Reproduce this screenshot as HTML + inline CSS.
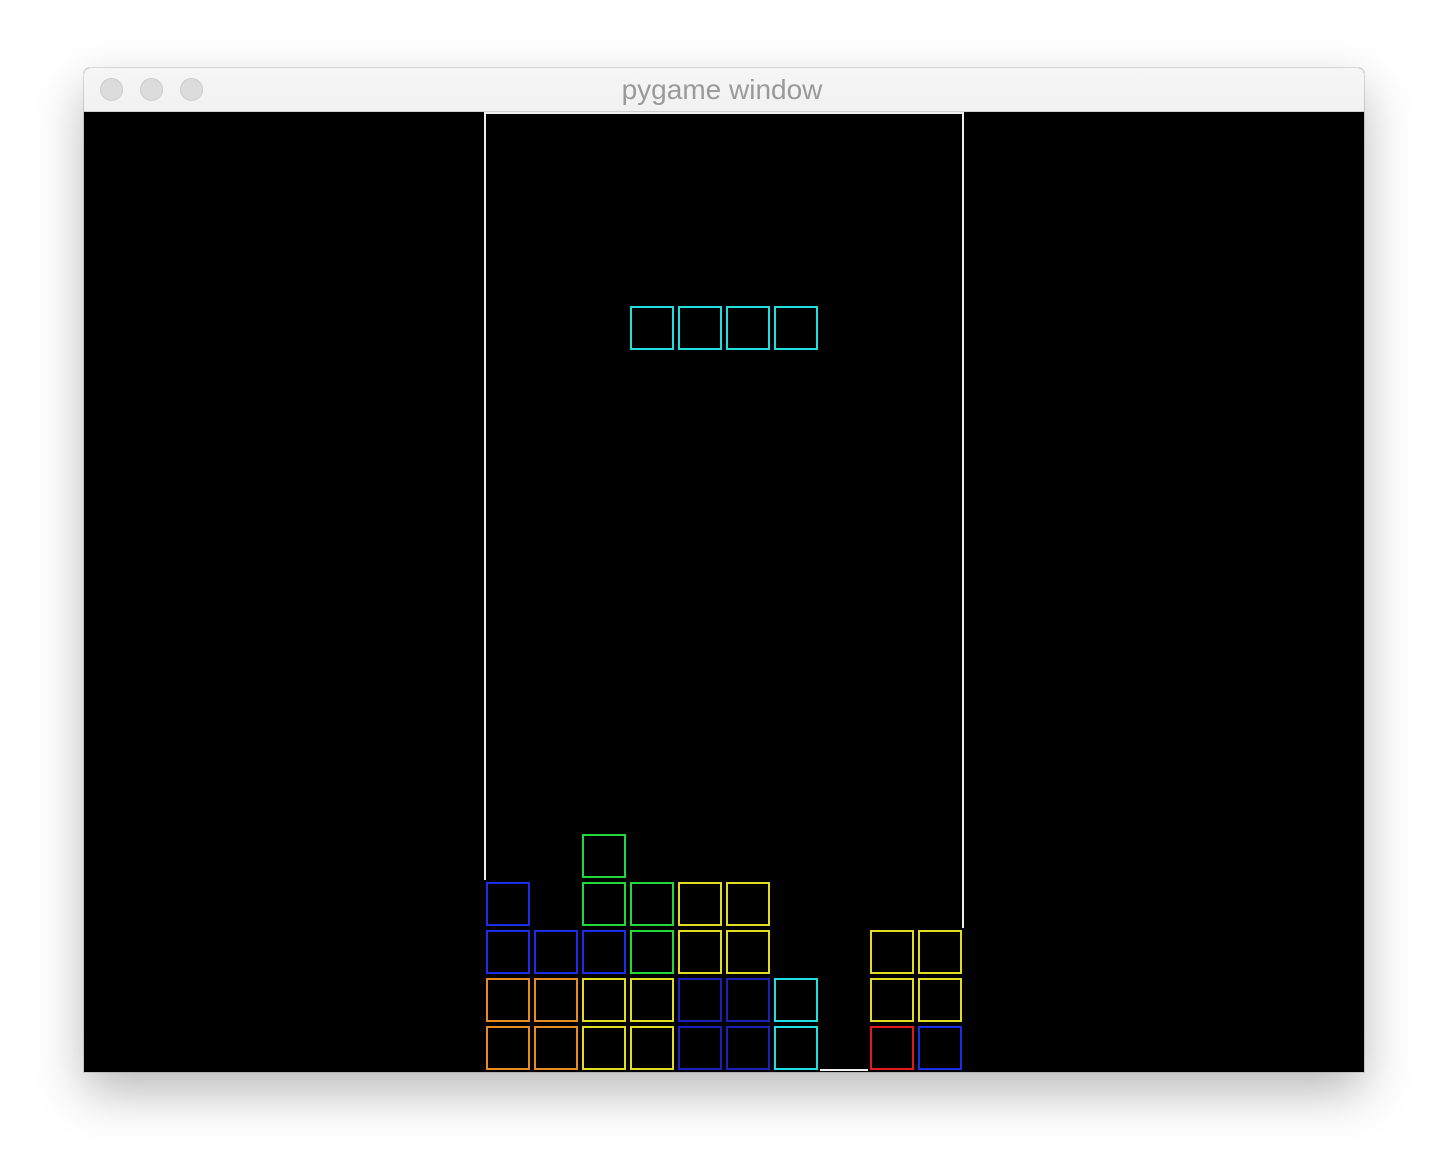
<!DOCTYPE html>
<html><head><style>
html,body{margin:0;padding:0;width:1448px;height:1172px;background:#fff;overflow:hidden;position:relative}
.win{position:absolute;left:84px;top:68px;width:1280px;height:1004px;border-radius:6px 6px 0 0;box-shadow:0 20px 50px rgba(0,0,0,0.28),0 0 0 1px rgba(0,0,0,0.12);overflow:hidden;background:#000}
.tb{position:absolute;left:0;top:0;width:1280px;height:43px;background:linear-gradient(#f6f6f6,#f1f1f1);border-bottom:1px solid #d0d0d0}
.dot{position:absolute;top:10px;width:23px;height:23px;border-radius:50%;background:#dcdcdc;border:1px solid #cdcdcd;box-sizing:border-box}
.title{position:absolute;left:0;width:1276px;top:6px;text-align:center;font:28px/32px "Liberation Sans",sans-serif;color:#9a9a9a}
.c{position:absolute;width:44px;height:44px;box-sizing:border-box;border:2px solid}
.l{position:absolute;background:#f0f0f0}
</style></head><body>
<div class="win">
<div class="tb"><div class="dot" style="left:16px"></div><div class="dot" style="left:56px"></div><div class="dot" style="left:96px"></div><div class="title">pygame window</div></div>
</div>
<div class="l" style="left:484px;top:112px;width:480px;height:2px"></div>
<div class="l" style="left:484px;top:112px;width:2px;height:768px"></div>
<div class="l" style="left:962px;top:112px;width:2px;height:816px"></div>
<div class="l" style="left:820px;top:1069px;width:48px;height:2px"></div>
<div class="c" style="left:630px;top:306px;border-color:#22dede"></div>
<div class="c" style="left:678px;top:306px;border-color:#22dede"></div>
<div class="c" style="left:726px;top:306px;border-color:#22dede"></div>
<div class="c" style="left:774px;top:306px;border-color:#22dede"></div>

<div class="c" style="left:582px;top:834px;border-color:#22d83a"></div>

<div class="c" style="left:486px;top:882px;border-color:#1a2ee8"></div>
<div class="c" style="left:582px;top:882px;border-color:#22d83a"></div>
<div class="c" style="left:630px;top:882px;border-color:#22d83a"></div>
<div class="c" style="left:678px;top:882px;border-color:#e4dc22"></div>
<div class="c" style="left:726px;top:882px;border-color:#e4dc22"></div>

<div class="c" style="left:486px;top:930px;border-color:#1a2ee8"></div>
<div class="c" style="left:534px;top:930px;border-color:#1a2ee8"></div>
<div class="c" style="left:582px;top:930px;border-color:#1a2ee8"></div>
<div class="c" style="left:630px;top:930px;border-color:#22d83a"></div>
<div class="c" style="left:678px;top:930px;border-color:#e4dc22"></div>
<div class="c" style="left:726px;top:930px;border-color:#e4dc22"></div>
<div class="c" style="left:870px;top:930px;border-color:#e4dc22"></div>
<div class="c" style="left:918px;top:930px;border-color:#e4dc22"></div>

<div class="c" style="left:486px;top:978px;border-color:#e88a22"></div>
<div class="c" style="left:534px;top:978px;border-color:#e88a22"></div>
<div class="c" style="left:582px;top:978px;border-color:#e4dc22"></div>
<div class="c" style="left:630px;top:978px;border-color:#e4dc22"></div>
<div class="c" style="left:678px;top:978px;border-color:#1c22b8"></div>
<div class="c" style="left:726px;top:978px;border-color:#1c22b8"></div>
<div class="c" style="left:774px;top:978px;border-color:#22dede"></div>
<div class="c" style="left:870px;top:978px;border-color:#e4dc22"></div>
<div class="c" style="left:918px;top:978px;border-color:#e4dc22"></div>

<div class="c" style="left:486px;top:1026px;border-color:#e88a22"></div>
<div class="c" style="left:534px;top:1026px;border-color:#e88a22"></div>
<div class="c" style="left:582px;top:1026px;border-color:#e4dc22"></div>
<div class="c" style="left:630px;top:1026px;border-color:#e4dc22"></div>
<div class="c" style="left:678px;top:1026px;border-color:#1c22b8"></div>
<div class="c" style="left:726px;top:1026px;border-color:#1c22b8"></div>
<div class="c" style="left:774px;top:1026px;border-color:#22dede"></div>
<div class="c" style="left:870px;top:1026px;border-color:#e41a1a"></div>
<div class="c" style="left:918px;top:1026px;border-color:#1a2ee8"></div>
</body></html>
